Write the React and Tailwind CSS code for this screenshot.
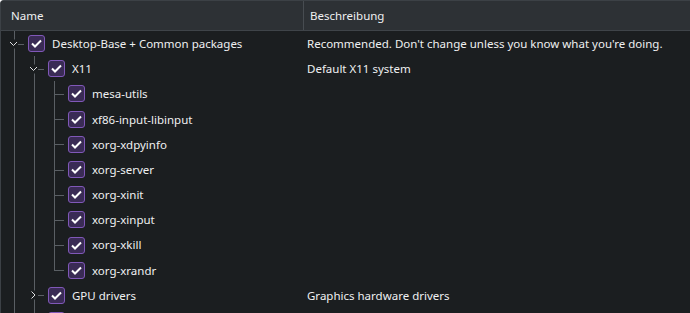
import { useState } from 'react';

const rows = [
  { name: 'Desktop-Base + Common packages', desc: "Recommended. Don't change unless you know what you're doing.", guides: [], branch: 'tee', expander: 'open' },
  { name: 'X11', desc: 'Default X11 system', guides: [true], branch: 'tee', expander: 'open' },
  { name: 'mesa-utils', guides: [true, true], branch: 'tee' },
  { name: 'xf86-input-libinput', guides: [true, true], branch: 'tee' },
  { name: 'xorg-xdpyinfo', guides: [true, true], branch: 'tee' },
  { name: 'xorg-server', guides: [true, true], branch: 'tee' },
  { name: 'xorg-xinit', guides: [true, true], branch: 'tee' },
  { name: 'xorg-xinput', guides: [true, true], branch: 'tee' },
  { name: 'xorg-xkill', guides: [true, true], branch: 'tee' },
  { name: 'xorg-xrandr', guides: [true, true], branch: 'ell' },
  { name: 'GPU drivers', desc: 'Graphics hardware drivers', guides: [true], branch: 'tee', expander: 'closed' },
  // next row is scrolled below the edge, only its checkbox top shows
  { name: '', desc: '', guides: [true], branch: 'tee', expander: 'closed' },
];

function Chevron({ open }) {
  return (
    <svg width="9" height="9" viewBox="0 0 9 9" className="absolute left-[5px] top-1/2 -translate-y-1/2 bg-[#1b1e20]">
      {open ? (
        <path d="M1 2.5 L4.5 6 L8 2.5" fill="none" stroke="#dfe1e3" strokeWidth="1" />
      ) : (
        <path d="M2.5 1 L6 4.5 L2.5 8" fill="none" stroke="#dfe1e3" strokeWidth="1" />
      )}
    </svg>
  );
}

function Checkbox({ checked, onClick }) {
  return (
    <button onClick={onClick} className="w-[17px] h-[17px] shrink-0 rounded-[3px] border border-[#8058b8] bg-[#3a2b55] flex items-center justify-center">
      {checked && (
        <svg width="11" height="9" viewBox="0 0 11 9">
          <path d="M1 4.5 L4 7.5 L10 1.5" fill="none" stroke="#ffffff" strokeWidth="2" />
        </svg>
      )}
    </button>
  );
}

function TreeRow({ row, checked, onToggle }) {
  return (
    <div className="flex h-[25.2px]">
      <div className="w-[302px] shrink-0 flex items-center pl-[3px] overflow-hidden">
        {row.guides.map((g, i) => (
          <div key={i} className="relative w-[20px] h-full shrink-0">
            {g && <div className="absolute left-[10px] top-0 bottom-0 w-px bg-[#5a5f64]"></div>}
          </div>
        ))}
        <div className="relative w-[20px] h-full shrink-0">
          <div className={`absolute left-[10px] top-0 w-px bg-[#5a5f64] ${row.branch === 'tee' ? 'bottom-0' : 'h-1/2'}`}></div>
          <div className="absolute left-[10px] right-0 top-1/2 h-px bg-[#5a5f64]"></div>
          {row.expander && <Chevron open={row.expander === 'open'} />}
        </div>
        <div className="ml-[4px]">
          <Checkbox checked={checked} onClick={onToggle} />
        </div>
        <span className="ml-[7px] whitespace-nowrap">{row.name}</span>
      </div>
      <div className="flex-1 flex items-center pl-[4px] whitespace-nowrap">{row.desc}</div>
    </div>
  );
}

export default function App() {
  const [checkedRows, setCheckedRows] = useState(rows.map(() => true));

  function onToggle(index) {
    const next = [...checkedRows];
    next[index] = !next[index];
    setCheckedRows(next);
  }

  return (
    <div className="w-[690px] h-[313px] overflow-hidden bg-[#1b1e20] text-[#eff0f1] text-[11.5px] border-l border-t border-[#3c4146] rounded-tl-[4px]" style={{ fontFamily: '"Noto Sans", "Open Sans", sans-serif' }}>
      <div className="flex h-[30px] bg-[#2d3135] border-b border-[#3f4449]">
        <div className="w-[302px] shrink-0 flex items-center pl-[10px]">Name</div>
        <div className="flex-1 flex items-center pl-[6px] border-l border-[#474c51]">Beschreibung</div>
      </div>
      <div>
        {rows.map((row, index) => (
          <TreeRow key={index} row={row} checked={checkedRows[index]} onToggle={() => onToggle(index)} />
        ))}
      </div>
    </div>
  );
}
